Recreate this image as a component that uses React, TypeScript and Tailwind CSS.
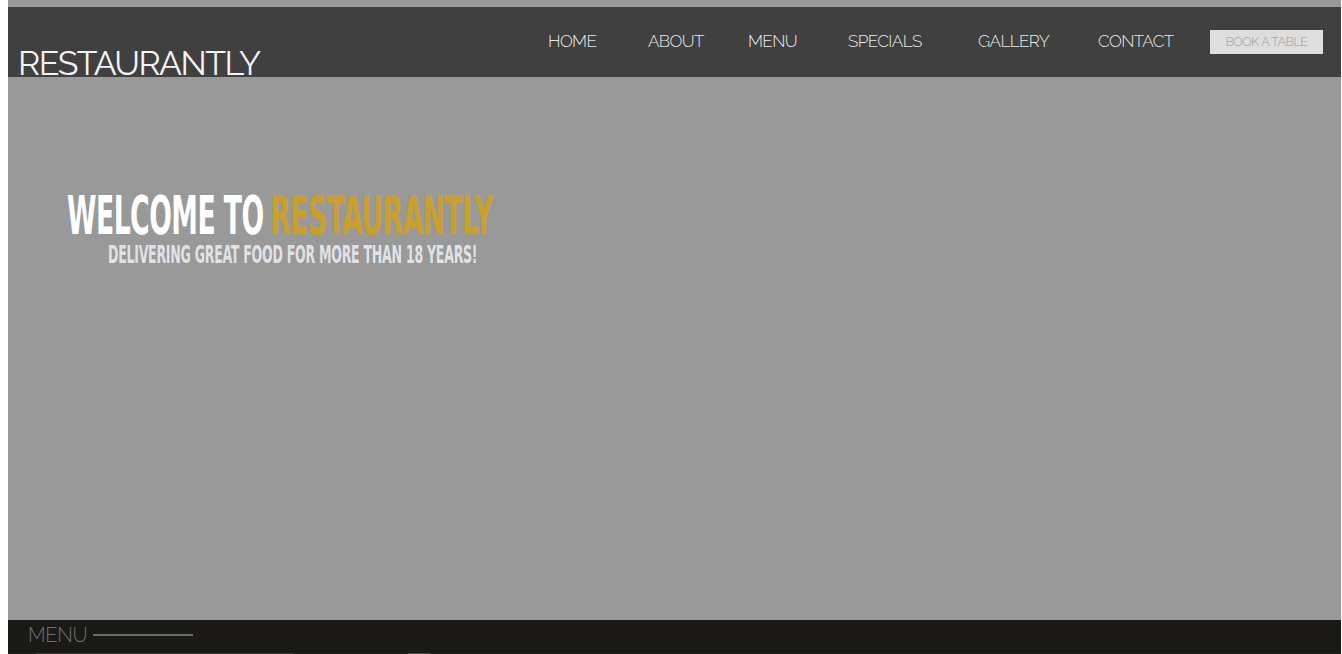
const NAV = [
  { label: 'HOME', w: 'w-[100px]' },
  { label: 'ABOUT', w: 'w-[100px]' },
  { label: 'MENU', w: 'w-[100px]' },
  { label: 'SPECIALS', w: 'w-[130px]' },
  { label: 'GALLERY', w: 'w-[120px]' },
  { label: 'CONTACT', w: 'w-[112px]' },
]

const raleway = "font-['Raleway','Lato','Open_Sans',sans-serif]"
const display = "font-['DejaVu_Sans','Liberation_Sans',sans-serif]"

export default function App() {
  return (
    <div className="h-[654px] overflow-hidden bg-white pl-[8px] pr-[1px]">
      <div className="bg-[#999999] pt-[7px]">
        {/* Header */}
        <header className="flex h-[70px] bg-[#404040]">
          <div className="flex w-[540px] items-end pl-[10px]">
            <span className={`${raleway} text-[34px] leading-[34px] font-normal tracking-[-1.5px] text-[#f4f4f4] translate-y-[3px]`}>
              RESTAURANTLY
            </span>
          </div>
          <nav className="flex items-start pt-[23px]">
            {NAV.map((n) => (
              <a key={n.label} className={`${n.w} ${raleway} text-[17px] leading-[22px] font-light tracking-[-0.6px] text-[#e8e8e8]`}>
                {n.label}
              </a>
            ))}
            <button className={`h-[24px] w-[113px] bg-[#dedede] ${raleway} text-[12.5px] font-light tracking-[-0.4px] text-[#9a9a9a]`}>
              BOOK A TABLE
            </button>
          </nav>
        </header>

        {/* Hero */}
        <section className="h-[543px] pt-[115px] pl-[59px]">
          <h1 className={`${display} origin-left scale-x-[0.55] whitespace-nowrap text-[54px] leading-[48px] font-bold tracking-[-1px] text-white [font-stretch:condensed]`}>
            WELCOME TO <span className="ml-[-4px] text-[#caa02d]">RESTAURANTLY</span>
          </h1>
          <p className={`${display} mt-[2px] ml-[41px] origin-left scale-x-[0.56] whitespace-nowrap text-[25px] leading-[26px] font-bold tracking-[-0.5px] text-[#e2e2e2] [font-stretch:condensed] [text-shadow:1px_0_0_rgba(120,140,200,0.35)]`}>
            DELIVERING GREAT FOOD FOR MORE THAN 18 YEARS!
          </p>
        </section>

        {/* Menu strip */}
        <section className="h-[33px] bg-[#1a1915] pl-[20px] pt-[3px]">
          <div className="flex items-center gap-[6px]">
            <span className={`${raleway} text-[20px] leading-[24px] font-light tracking-[-0.3px] text-[#6e6e6e]`}>MENU</span>
            <span className="h-[2px] w-[100px] bg-[#6a6a6a]" />
          </div>
        </section>
        <div className="flex h-[1px] bg-[#1f1f1c]">
          <div className="w-[28px]" />
          <div className="w-[257px] bg-[#3a3a3a]" />
          <div className="w-[115px]" />
          <div className="w-[22px] bg-[#4a4a4a]" />
        </div>
      </div>
    </div>
  )
}
